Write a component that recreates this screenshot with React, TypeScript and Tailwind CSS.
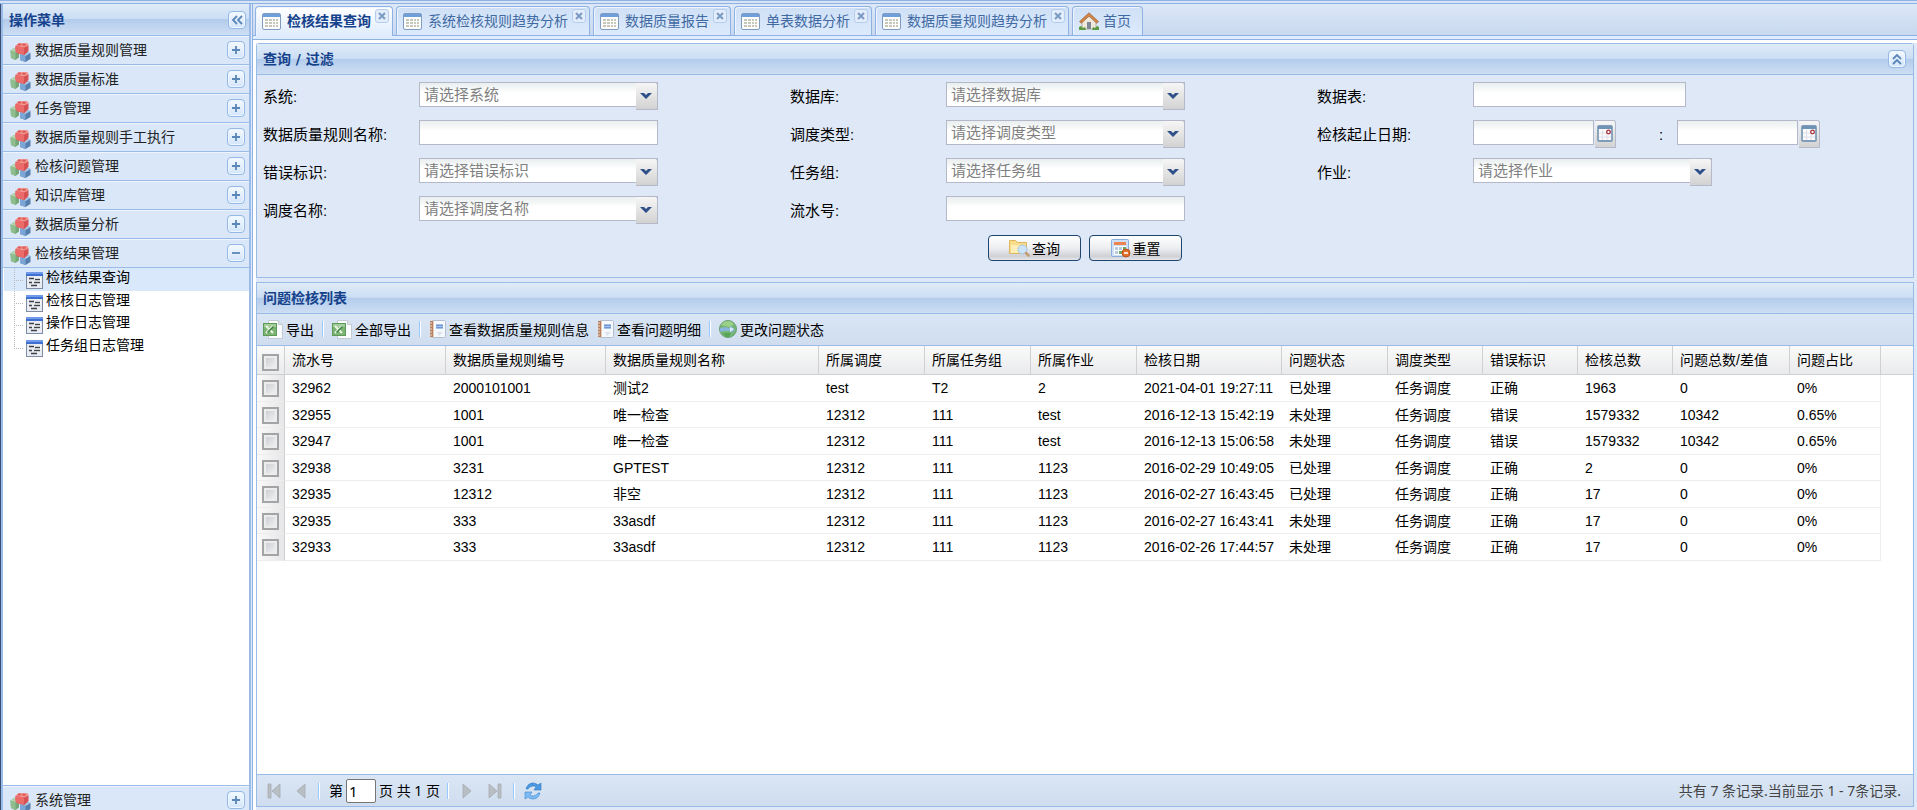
import { useState } from "react";
import type { ReactNode } from "react";

const MENUS = [
  "数据质量规则管理",
  "数据质量标准",
  "任务管理",
  "数据质量规则手工执行",
  "检核问题管理",
  "知识库管理",
  "数据质量分析",
];

const TREE = ["检核结果查询", "检核日志管理", "操作日志管理", "任务组日志管理"];

const TABS = [
  "检核结果查询",
  "系统检核规则趋势分析",
  "数据质量报告",
  "单表数据分析",
  "数据质量规则趋势分析",
];

const COLUMNS = [
  { title: "流水号", width: "w-[161px]" },
  { title: "数据质量规则编号", width: "w-[160px]" },
  { title: "数据质量规则名称", width: "w-[213px]" },
  { title: "所属调度", width: "w-[106px]" },
  { title: "所属任务组", width: "w-[106px]" },
  { title: "所属作业", width: "w-[106px]" },
  { title: "检核日期", width: "w-[145px]" },
  { title: "问题状态", width: "w-[106px]" },
  { title: "调度类型", width: "w-[95px]" },
  { title: "错误标识", width: "w-[95px]" },
  { title: "检核总数", width: "w-[95px]" },
  { title: "问题总数/差值", width: "w-[117px]" },
  { title: "问题占比", width: "w-[91px]" },
];

const ROWS = [
  ["32962", "2000101001", "测试2", "test", "T2", "2", "2021-04-01 19:27:11", "已处理", "任务调度", "正确", "1963", "0", "0%"],
  ["32955", "1001", "唯一检查", "12312", "111", "test", "2016-12-13 15:42:19", "未处理", "任务调度", "错误", "1579332", "10342", "0.65%"],
  ["32947", "1001", "唯一检查", "12312", "111", "test", "2016-12-13 15:06:58", "未处理", "任务调度", "错误", "1579332", "10342", "0.65%"],
  ["32938", "3231", "GPTEST", "12312", "111", "1123", "2016-02-29 10:49:05", "已处理", "任务调度", "正确", "2", "0", "0%"],
  ["32935", "12312", "非空", "12312", "111", "1123", "2016-02-27 16:43:45", "已处理", "任务调度", "正确", "17", "0", "0%"],
  ["32935", "333", "33asdf", "12312", "111", "1123", "2016-02-27 16:43:41", "未处理", "任务调度", "正确", "17", "0", "0%"],
  ["32933", "333", "33asdf", "12312", "111", "1123", "2016-02-26 17:44:57", "未处理", "任务调度", "正确", "17", "0", "0%"],
];

const HEADER_BG = "bg-[linear-gradient(#dfebf8_0%,#cbdef4_48%,#b3ccec_50%,#cddef3_100%)]";
const BAR_BG = "bg-[linear-gradient(#dae6f4,#cfddef)]";
const FIELD =
  "h-[25px] rounded-none border border-[#b5b8c8] bg-[linear-gradient(#e9eeee,#fff_10px)] px-1 text-[15px] leading-[23px] outline-none";
const CHECKBOX =
  "block h-[17px] w-[17px] appearance-none border-2 border-[#a3a4a6] bg-[linear-gradient(135deg,#c5c9cf,#f6f6f6)] shadow-[inset_0_0_0_2px_#ececec] checked:bg-[#4a6d95]";

function CubesIcon() {
  return (
    <svg width="21" height="20" viewBox="0 0 21 20" className="shrink-0">
      <path d="M0.500 8.500L4 6l5 1.500v8L5.500 18 1 16z" fill="#74a678" />
      <path d="M0.500 8.500L4 6l5 1.500L5.500 10z" fill="#b5d6b0" />
      <path d="M5.500 10v8L1 16 0.500 8.500z" fill="#8fbd8e" />
      <path d="M10 12.500l5-3 5.500 1.500v6L15.500 20 10 18z" fill="#567fae" />
      <path d="M10 12.500l5-3 5.500 1.500-5 3z" fill="#a9c8e8" />
      <path d="M15.500 14v6L10 18v-5.500z" fill="#7ba6d6" />
      <path d="M5.500 4L9 1l8 0 1.500 2.500V9l-4 4-7-1.500L5.500 9z" fill="#d65252" />
      <path d="M5.500 4L9 1l8 0 1.500 2.500L14 5.500z" fill="#f39a95" />
      <path d="M5.500 4L14 5.500v7L7.500 11.500 5.500 9z" fill="#ea6b69" />
      <ellipse cx="9.500" cy="2.600" rx="2" ry="1.200" fill="#e05f5d" />
      <ellipse cx="14" cy="2.800" rx="2" ry="1.200" fill="#e05f5d" />
    </svg>
  );
}

function GridIcon() {
  return (
    <svg width="19" height="17" viewBox="0 0 19 17" className="shrink-0">
      <rect x="0.500" y="0.500" width="18" height="16" rx="1.500" fill="#fdfdfd" stroke="#7f9bc0" />
      <rect x="1" y="1" width="17" height="3" fill="#6e9fdb" />
      <path
        d="M3 6h3v2H3zM7 6h3v2H7zM11 6h2v2h-2zM14 6h2v2h-2zM3 9h3v2H3zM7 9h3v2H7zM11 9h2v2h-2zM14 9h2v2h-2zM3 12h3v2H3zM7 12h3v2H7zM11 12h2v2h-2zM14 12h2v2h-2z"
        fill="#c6c8ba"
      />
    </svg>
  );
}

function HomeIcon() {
  return (
    <svg width="20" height="19" viewBox="0 0 20 19" className="shrink-0">
      <path d="M3 8l7-6 7 6v9H3z" fill="#efe8dc" stroke="#b0a48e" strokeWidth="0.8" />
      <path d="M8 10h4v7H8z" fill="#7d8894" />
      <path
        d="M0.500 9.500L10 0.800l9.500 8.700-1.700 1.800L10 4.200l-7.800 7.100z"
        fill="#cf8648"
        stroke="#9b5b2a"
        strokeWidth="0.6"
      />
      <path d="M0 18v-3l2-1 2 2 2-1 1 3zM13 18l1-3 2 1 2-2 2 1v3z" fill="#5a9a42" />
    </svg>
  );
}

function FormIcon() {
  return (
    <svg width="17" height="17" viewBox="0 0 17 17" className="mt-1 shrink-0">
      <rect x="0.500" y="0.500" width="16" height="16" fill="#e9ecf2" stroke="#7d8ba3" />
      <path d="M0 0h17v4H0z" fill="#3f6fd0" />
      <path d="M0 0h17v2H0z" fill="#6f9aea" />
      <path d="M9 6h6v3H9zM8 9h6v3H8z" fill="#fff" />
      <path d="M3 6.500h5M9 7.500h5M3 10.500h3M8 10.500h6M5 13.500h6" stroke="#3e4148" strokeWidth="1.400" />
    </svg>
  );
}

function ExcelIcon() {
  return (
    <svg width="20" height="19" viewBox="0 0 20 19" className="shrink-0">
      <path d="M5.500 0.500h10l4 4v14h-14z" fill="#fbfcfd" stroke="#c3cad2" />
      <path d="M15.500 0.500v4h4" fill="#dde3e9" stroke="#c3cad2" />
      <rect x="0.500" y="3.500" width="13" height="12" fill="#7db473" stroke="#5c9a58" />
      <path d="M1 4h12v3H1z" fill="#a3cc99" />
      <path d="M3 6l7 7M10 6l-7 7" stroke="#e8f4e4" strokeWidth="2" />
      <path d="M10.500 6.500l-6 6" stroke="#3f8040" strokeWidth="1.600" />
    </svg>
  );
}

function NotebookIcon() {
  return (
    <svg width="17" height="18" viewBox="0 0 17 18" className="shrink-0">
      <rect x="2.500" y="0.500" width="14" height="17" rx="1" fill="#f5f8fc" stroke="#b3bfcd" />
      <path d="M1 1h3v16H1z" fill="#b9805f" />
      <path d="M4 1h1v16H4z" fill="#e6cdbd" />
      <path d="M0 3h3M0 6h3M0 9h3M0 12h3M0 15h3" stroke="#e8ddd4" />
      <path d="M7 4h7v5H7z" fill="#a5c1ea" />
      <path d="M7 5.500h7M7 7.500h7" stroke="#6f99d6" />
      <path d="M8 12h6l-4 4z" fill="#dae1e9" />
    </svg>
  );
}

function GlobeIcon() {
  return (
    <svg width="18" height="18" viewBox="0 0 18 18" className="shrink-0">
      <circle cx="9" cy="9" r="8.500" fill="#74b573" stroke="#6a9f78" />
      <path d="M2 5a8 8 0 0 1 13-1l-4 3-5-1z" fill="#9bd089" />
      <path d="M1 8l5-1 5 1 1-2 4 4-4 3-1-2H6l-5 1z" fill="#86b4da" />
      <path d="M11 7l4 2-4 3z" fill="#dbeaf6" />
      <path d="M4 13h8l-2 4H7z" fill="#57a358" />
    </svg>
  );
}

function SearchFolderIcon() {
  return (
    <svg width="21" height="18" viewBox="0 0 21 18" className="shrink-0">
      <path d="M0.500 1.500h6l2 2h9v11h-17z" fill="#f8dc88" stroke="#dcb65c" />
      <path d="M2 6h15v8H2z" fill="#fdeeb8" />
      <circle cx="13.500" cy="10.500" r="4.500" fill="#cbe4fa" stroke="#a5c4e2" />
      <path d="M17 14l2.500 2.500" stroke="#c49a72" strokeWidth="2.500" strokeLinecap="round" />
    </svg>
  );
}

function ResetIcon() {
  return (
    <svg width="20" height="19" viewBox="0 0 20 19" className="shrink-0">
      <rect x="0.500" y="0.500" width="17" height="17" rx="1" fill="#cfe0f6" stroke="#89aede" />
      <path d="M3 3h12v3H3z" fill="#ee8550" />
      <path d="M3 7h12v9H3z" fill="#fff" />
      <path d="M4 8h3v3H4zM8 8h3v3H8zM4 12h3v3H4z" fill="#b9cbe0" />
      <path d="M12 8h3v3h-3zM8 12h3v3H8z" fill="#6da864" />
      <circle cx="15" cy="14" r="4" fill="#e2702b" stroke="#b9541c" />
      <path d="M13 14h4" stroke="#fff" strokeWidth="1.600" />
    </svg>
  );
}

function CalendarIcon() {
  return (
    <svg width="16" height="17" viewBox="0 0 16 17">
      <rect x="1" y="1" width="14" height="15" rx="1" fill="#fbfbfd" stroke="#7f9db9" strokeWidth="1.800" />
      <path d="M1 1h14v3H1z" fill="#6f92b5" />
      <path d="M2 8h12M2 12h12M5.500 5v10M10 5v10" stroke="#dcdfe6" />
      <circle cx="11.500" cy="7" r="1.800" fill="#fff" stroke="#a32f3a" strokeWidth="1.300" />
    </svg>
  );
}

function ToolButton({ label, path }: { label: string; path: string }) {
  return (
    <button
      type="button"
      aria-label={label}
      className="flex h-[18px] w-[18px] shrink-0 items-center justify-center rounded-[4px] border border-[#95b8e4] bg-[linear-gradient(#f4f9ff,#d3e5fa)] shadow-[inset_0_0_0_1px_#eef6ff]"
    >
      <svg width="12" height="12" viewBox="0 0 12 12" fill="none" stroke="#5a86b8" strokeWidth="1.800">
        <path d={path} />
      </svg>
    </button>
  );
}

function MenuHeader({ title, open }: { title: string; open?: boolean }) {
  return (
    <div className="flex h-[29px] items-center border-b border-[#99bbe8] bg-[#d9e7f8] pr-1 pl-[7px] shadow-[inset_0_1px_0_#edf4fd]">
      <div className="pt-1">
        <CubesIcon />
      </div>
      <span className="flex-1 pl-1 text-[14px] leading-5 text-[#222]">{title}</span>
      <ToolButton label={title} path={open ? "M2 6h8" : "M2 6h8M6 2v8"} />
    </div>
  );
}

function Sidebar() {
  return (
    <aside className="flex w-[251px] shrink-0 flex-col border-r-2 border-l border-r-[#9bbbe9] border-l-[#3b4d72]">
      <div className="flex min-h-0 flex-1 flex-col border-l-2 border-[#99bbe8]">
        <div className={`flex h-8 items-center justify-between border-b border-[#99bbe8] pr-[3px] pl-[6px] ${HEADER_BG}`}>
          <h2 className="text-[14px] leading-5 font-bold text-[#15428b]">操作菜单</h2>
          <ToolButton label="收起" path="M6 2L2 6l4 4M11 2L7 6l4 4" />
        </div>
        {MENUS.map((m) => (
          <MenuHeader key={m} title={m} />
        ))}
        <MenuHeader title="检核结果管理" open />
        <ul className="flex-1 bg-white pl-px">
          {TREE.map((node, i) => (
            <li key={node} className={`flex items-start odd:h-[23px] even:h-[22px] ${i === 0 ? "bg-[#d9e8fb]" : ""}`}>
              <svg width="22" height="22" className="shrink-0" fill="none" stroke="#b9b9b9" strokeDasharray="1 1">
                <path d={i === TREE.length - 1 ? "M10.500 0v12" : "M10.500 0v22"} />
                <path d="M10 12.500h9" />
              </svg>
              <FormIcon />
              <a href="#" className="pl-[3px] text-[14px] leading-[18px] text-black">
                {node}
              </a>
            </li>
          ))}
        </ul>
        <div className="h-[25px] shrink-0 overflow-hidden border-t border-[#99bbe8]">
          <MenuHeader title="系统管理" />
        </div>
      </div>
    </aside>
  );
}

function TabBar() {
  const [active, setActive] = useState(TABS[0]);

  return (
    <div className="border-b border-[#8db2e3] bg-[#deecfd] pb-[3px]">
      <div className="flex h-8 items-end gap-[3px] border-b border-[#8db2e3] bg-[linear-gradient(#dde8f7,#c8d8ef)] pl-[2px]">
        {TABS.map((tab) => {
          const on = tab === active;
          return (
            <div
              key={tab}
              className={`flex rounded-t-[4px] border border-b-0 border-[#8db2e3] pr-[3px] pl-[6px] shadow-[inset_1px_1px_0_#eef5fe] ${
                on ? "-mb-px h-[30px] bg-[linear-gradient(#fff,#deecfd)]" : "h-[29px] bg-[linear-gradient(#cfe0f6,#dceafc)]"
              }`}
            >
              <button
                type="button"
                onClick={() => setActive(tab)}
                className={`flex h-7 items-center gap-[6px] text-[14px] leading-5 whitespace-nowrap ${
                  on ? "font-bold text-[#15428b]" : "text-[#416aa3]"
                }`}
              >
                <GridIcon />
                {tab}
              </button>
              <button
                type="button"
                aria-label={`关闭${tab}`}
                className="mt-[2px] ml-1 flex h-[14px] w-[14px] items-center justify-center rounded-[3px] border border-[#b4cdef] bg-[#e4eefb]"
              >
                <svg width="8" height="8" viewBox="0 0 8 8" stroke="#7d9cc6" strokeWidth="2.200">
                  <path d="M1 1l6 6M7 1L1 7" />
                </svg>
              </button>
            </div>
          );
        })}
        <button
          type="button"
          className="flex h-[29px] items-center gap-1 rounded-t-[4px] border border-b-0 border-[#8db2e3] bg-[linear-gradient(#cfe0f6,#dceafc)] pr-[11px] pl-[6px] text-[14px] leading-5 whitespace-nowrap text-[#416aa3] shadow-[inset_1px_1px_0_#eef5fe]"
        >
          <HomeIcon />
          首页
        </button>
      </div>
    </div>
  );
}

function Field({ label, id, children }: { label: string; id: string; children: ReactNode }) {
  return (
    <div className="flex h-[38px] items-start">
      <label htmlFor={id} className="w-[156px] shrink-0 text-[15px] leading-[30px] whitespace-nowrap">
        {label}:
      </label>
      {children}
    </div>
  );
}

function SelectField({ label, id }: { label: string; id: string }) {
  return (
    <Field label={label} id={id}>
      <div className="relative w-[239px]">
        <select id={id} className={`block w-full appearance-none text-[#808080] ${FIELD}`}>
          <option>请选择{label}</option>
        </select>
        <span className="pointer-events-none absolute top-0 right-0 flex h-7 w-[22px] items-center justify-center rounded-tr-[3px] border-t border-r border-b border-[#b5b8c8] bg-[linear-gradient(#f6f6f6,#d2d2d2)] pr-px">
          <svg width="12" height="8" viewBox="0 0 12 8">
            <path d="M0 1h4l2 2 2-2h4L6 7z" fill="#2f4f8a" />
          </svg>
        </span>
      </div>
    </Field>
  );
}

function DateInput({ id, label }: { id: string; label?: string }) {
  return (
    <div className="flex gap-px">
      <input id={id} type="text" aria-label={label} className={`w-[121px] ${FIELD}`} />
      <button
        type="button"
        aria-label="选择日期"
        className="flex h-7 w-[21px] justify-center rounded-tr-[3px] border border-l-0 border-[#b5b8c8] bg-[linear-gradient(#f6f6f6,#d2d2d2)] pt-1"
      >
        <CalendarIcon />
      </button>
    </div>
  );
}

function FilterButton({ icon, children }: { icon: ReactNode; children: ReactNode }) {
  return (
    <button
      type="button"
      className="flex h-[26px] w-[93px] items-center justify-center gap-[2px] rounded-[4px] border border-[#1d4570] bg-[linear-gradient(#fff_0%,#eceef1_50%,#cfd1d6_85%,#e6e7ea_100%)] text-[14px] leading-5 text-black"
    >
      {icon}
      <span className="pt-[2px]">{children}</span>
    </button>
  );
}

function FilterPanel() {
  return (
    <section className="rounded-t-[3px] border border-[#99bbe8]">
      <div className={`flex h-[31px] items-center justify-between border-b border-[#99bbe8] pr-[7px] pl-[6px] ${HEADER_BG}`}>
        <h2 className="font-['DejaVu_Sans','Noto_Sans_CJK_SC',sans-serif] text-[14px] leading-5 font-bold text-[#15428b]">
          查询 / 过滤
        </h2>
        <ToolButton label="折叠" path="M2 6l4-4 4 4M2 11l4-4 4 4" />
      </div>
      <form className="bg-[#dfe8f6] pt-[7px] pb-4" onSubmit={(e) => e.preventDefault()}>
        <div className="grid grid-cols-3 pr-[69px] pl-[6px]">
          <SelectField label="系统" id="system" />
          <SelectField label="数据库" id="database" />
          <Field label="数据表" id="table">
            <input id="table" type="text" className={`w-[213px] ${FIELD}`} />
          </Field>

          <Field label="数据质量规则名称" id="ruleName">
            <input id="ruleName" type="text" className={`w-[239px] ${FIELD}`} />
          </Field>
          <SelectField label="调度类型" id="scheduleType" />
          <Field label="检核起止日期" id="dateFrom">
            <DateInput id="dateFrom" />
            <span className="w-[61px] shrink-0 pl-[43px] text-[15px] leading-[30px]">:</span>
            <DateInput id="dateTo" label="检核截止日期" />
          </Field>

          <SelectField label="错误标识" id="errorFlag" />
          <SelectField label="任务组" id="taskGroup" />
          <SelectField label="作业" id="job" />

          <SelectField label="调度名称" id="scheduleName" />
          <Field label="流水号" id="serial">
            <input id="serial" type="text" className={`w-[239px] ${FIELD}`} />
          </Field>
        </div>
        <div className="flex justify-center gap-2 pt-px">
          <FilterButton icon={<SearchFolderIcon />}>查询</FilterButton>
          <FilterButton icon={<ResetIcon />}>重置</FilterButton>
        </div>
      </form>
    </section>
  );
}

function Separator() {
  return <span className="h-4 w-[2px] shrink-0 border-r border-l border-r-white border-l-[#98c8ff]" />;
}

function ToolbarButton({ icon, children }: { icon: ReactNode; children: ReactNode }) {
  return (
    <button type="button" className="flex items-center gap-[3px] text-[14px] leading-5 whitespace-nowrap">
      {icon}
      <span className="pt-[2px]">{children}</span>
    </button>
  );
}

function Toolbar() {
  return (
    <div className={`flex h-8 shrink-0 items-center gap-2 border-b border-[#99bbe8] pb-px pl-[6px] ${BAR_BG}`}>
      <ToolbarButton icon={<ExcelIcon />}>导出</ToolbarButton>
      <Separator />
      <ToolbarButton icon={<ExcelIcon />}>全部导出</ToolbarButton>
      <Separator />
      <ToolbarButton icon={<NotebookIcon />}>查看数据质量规则信息</ToolbarButton>
      <ToolbarButton icon={<NotebookIcon />}>查看问题明细</ToolbarButton>
      <Separator />
      <ToolbarButton icon={<GlobeIcon />}>更改问题状态</ToolbarButton>
    </div>
  );
}

function ResultTable() {
  return (
    <div className="min-h-0 flex-1 overflow-hidden bg-white">
      <table className="w-full table-fixed border-separate border-spacing-0 text-[14px] leading-5 whitespace-nowrap">
        <thead>
          <tr className="h-[29px] bg-[linear-gradient(#fafafa,#e9eaec)] text-left">
            <th className="w-7 border-r border-b border-[#d0d0d0] pt-[5px] pl-[5px]">
              <input type="checkbox" aria-label="全选" className={CHECKBOX} />
            </th>
            {COLUMNS.map((c) => (
              <th key={c.title} className={`border-r border-b border-[#d0d0d0] pl-[7px] font-normal ${c.width}`}>
                {c.title}
              </th>
            ))}
            <th className="border-b border-[#d0d0d0]" />
          </tr>
        </thead>
        <tbody>
          {ROWS.map((row, i) => (
            <tr key={i} className="odd:h-[27px] even:h-[26px]">
              <td className="border-r border-b border-r-[#d0d0d0] border-b-[#ededed] bg-[linear-gradient(90deg,#fafafa,#e6e6e8)] pt-[5px] pl-[5px] align-top">
                <input type="checkbox" aria-label={`选择 ${row[0]}`} className={CHECKBOX} />
              </td>
              {row.map((cell, j) => (
                <td key={j} className="border-b border-[#ededed] pt-[3px] pl-[7px] align-top nth-[14]:border-r">
                  {cell}
                </td>
              ))}
            </tr>
          ))}
        </tbody>
      </table>
    </div>
  );
}

function PageButton({ label, path }: { label: string; path: string }) {
  return (
    <button type="button" disabled aria-label={label} className="flex w-4 justify-center">
      <svg width="14" height="16" viewBox="0 0 14 16" fill="#b9bdc4" stroke="#a6abb3" strokeWidth="0.800">
        <path d={path} />
      </svg>
    </button>
  );
}

function Pager() {
  const [page, setPage] = useState("1");

  return (
    <div
      className={`flex h-8 shrink-0 items-center border-t border-[#99bbe8] pr-3 pl-[9px] font-['Noto_Sans','Noto_Sans_CJK_SC',sans-serif] text-[14px] leading-5 ${BAR_BG}`}
    >
      <div className="flex items-center gap-[11px]">
        <PageButton label="首页" path="M1 1h3v14H1zM13 1v14L5 8z" />
        <PageButton label="上一页" path="M11 1v14L3 8z" />
      </div>
      <div className="flex items-center px-[9px]">
        <Separator />
      </div>
      <label htmlFor="page" className="pr-[3px]">
        第
      </label>
      <input
        id="page"
        type="text"
        value={page}
        onChange={(e) => setPage(e.target.value)}
        className="h-6 w-[30px] rounded-[2px] border border-[#767676] bg-white px-[2px] text-[15px] outline-none"
      />
      <span className="pr-[7px] pl-[3px]">页 共 1 页</span>
      <Separator />
      <div className="flex items-center gap-3 px-[10px]">
        <PageButton label="下一页" path="M3 1v14l8-7z" />
        <PageButton label="末页" path="M1 1v14l8-7zM10 1h3v14h-3z" />
      </div>
      <Separator />
      <button type="button" aria-label="刷新" className="ml-[9px]">
        <svg width="18" height="18" viewBox="0 0 18 18">
          <path d="M2 7c1-4 4-6 7-6 2 0 4 1 5 2l3-2v7h-7l2-3c-2-2-6-1-8 2z" fill="#4b97e0" stroke="#2f78c4" strokeWidth="0.600" />
          <path d="M16 11c-1 4-4 6-7 6-2 0-4-1-5-2l-3 2v-7h7l-2 3c2 2 6 1 8-2z" fill="#7fbcf3" stroke="#3d88d2" strokeWidth="0.600" />
        </svg>
      </button>
      <span className="flex-1 text-right text-[#444]">共有 7 条记录.当前显示 1 - 7条记录.</span>
    </div>
  );
}

export default function App() {
  return (
    <div className="flex h-screen flex-col overflow-hidden bg-[#dfe8f6] font-['Liberation_Sans','Noto_Sans_CJK_SC',sans-serif] text-black">
      <div className="h-1 shrink-0 border-y border-[#8db2e3] bg-[#d7e4f6]" />
      <div className="flex min-h-0 flex-1">
        <Sidebar />
        <main className="ml-px flex min-w-0 flex-1 flex-col border-l border-[#8db2e3]">
          <TabBar />
          <div className="flex min-h-0 flex-1 flex-col border-l-3 border-white bg-[#dfe8f6] pr-[3px] pb-[3px]">
            <div className="-mr-[3px] h-[3px] shrink-0 bg-white" />
            <FilterPanel />
            <section className="mt-1 flex min-h-0 flex-1 flex-col border border-[#99bbe8]">
              <div className={`flex h-[31px] shrink-0 items-center border-b border-[#99bbe8] pl-[6px] ${HEADER_BG}`}>
                <h2 className="text-[14px] leading-5 font-bold text-[#15428b]">问题检核列表</h2>
              </div>
              <Toolbar />
              <ResultTable />
              <Pager />
            </section>
          </div>
        </main>
      </div>
    </div>
  );
}
